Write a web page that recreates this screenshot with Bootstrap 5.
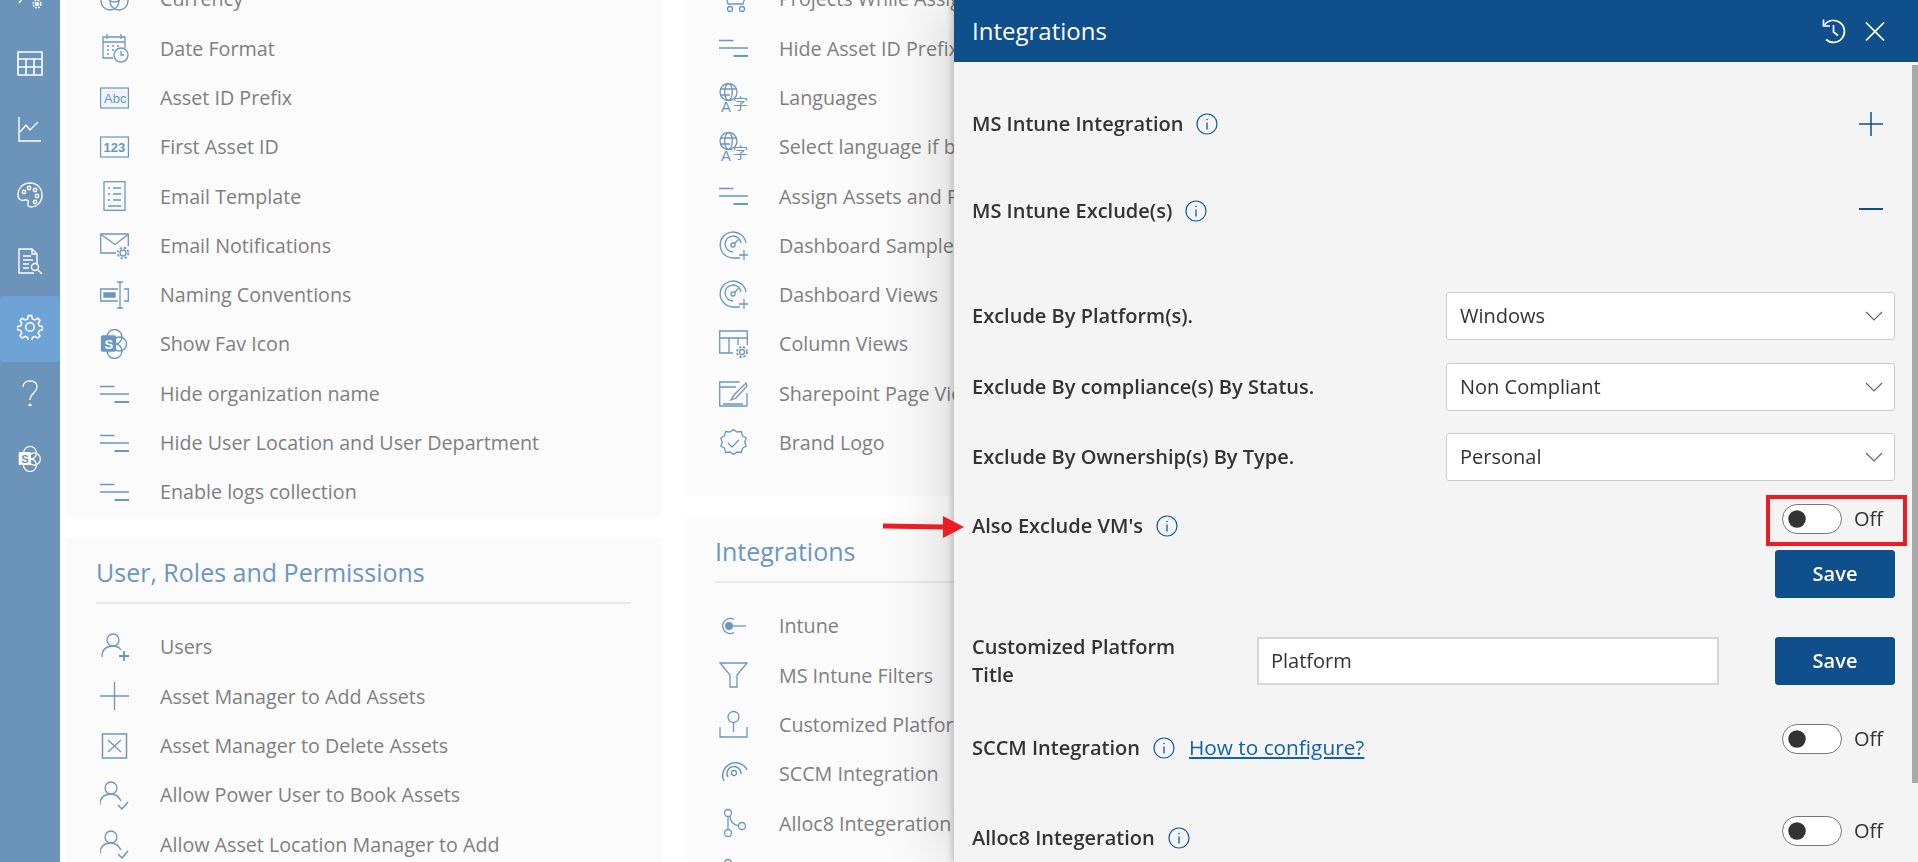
<!DOCTYPE html>
<html lang="en">
<head>
  <meta charset="UTF-8">
  <meta name="viewport" content="width=device-width, initial-scale=1.0">
  <title>Settings - Integrations</title>
  <link href="https://cdn.jsdelivr.net/npm/bootstrap@5.3.2/dist/css/bootstrap.min.css" rel="stylesheet">
  <style>
    body { font-family: "Open Sans", "Liberation Sans", sans-serif; background: #fff; overflow: hidden; height: 862px; }

    /* left rail */
    .side-rail { width: 60px; background: #6c93b9; color: #fff; flex: none; height: 862px; overflow: hidden; }
    .rail-item { height: 66px; width: 60px; flex: none; }
    .rail-item svg { width: 26px; height: 26px; fill: none; stroke: #fff; stroke-width: 1.4; }
    .rail-item.rail-top { height: 30px; }
    .rail-item.rail-top svg { width: 60px; height: 30px; }
    .rail-item.rail-on { background: #6fa3d5; border-radius: 4px; margin: 2px 0 -2px; padding-bottom: 4px; }

    /* settings cards behind the panel */
    .set-area { display: grid; grid-template-columns: 595px 595px; gap: 24px; padding-left: 6px; margin-top: -25px; }
    .set-col { display: flex; flex-direction: column; }
    .set-card { background: #fbfbfb; padding: 0 30px 0 34px; }
    .set-first-l { height: 542px; margin-bottom: 21px; }
    .set-first-r { height: 521px; margin-bottom: 21px; }
    .set-head { color: #6c96c2; font-size: 25px; font-weight: 400; margin: 0 0 0 -4px; padding: 16px 0 12px 0; line-height: 36px; border-bottom: 2px solid #e9e9e9; }
    .set-list { margin: 18.5px 0 0 0; padding: 0; list-style: none; }
    .set-list.list-top { margin-top: -0.5px; }
    .set-row { height: 49.3px; color: #7f7f7f; font-size: 19.7px; gap: 31px; white-space: nowrap; }
    .row-ico { width: 29px; height: 30px; flex: none; fill: none; stroke: #6c96c2; stroke-width: 1.3; color: #6c96c2; }

    /* integrations drawer */
    .int-panel.offcanvas { --bs-offcanvas-width: 964px; background: #f4f4f4; border-left: 0; overflow: visible;
      box-shadow: -3px 0 6px rgba(0,0,0,.16), -20px 0 50px rgba(0,0,0,.11); }
    .int-panel .offcanvas-header { height: 62px; background: #0f4f8b; color: #fff; padding: 0 30px 0 18px; flex: none; }
    .int-panel .offcanvas-title { font-size: 24px; font-weight: 400; line-height: 1; }
    .head-btn { width: 26px; height: 28px; fill: none; stroke: #fff; stroke-width: 1.7; }
    .int-body { padding: 18px 23px 0 18px; color: #333; overflow: hidden; }
    .int-label { font-size: 20px; font-weight: 600; color: #333; line-height: 28px; margin: 0; }
    .int-acc { height: 87px; }
    .info-ico { width: 22px; height: 22px; flex: none; margin-left: 13px; fill: none; stroke: #0f5a9c; stroke-width: 1.2; }
    .acc-ico { width: 26px; height: 26px; fill: none; stroke: #0f4f8b; margin-right: 11px; }
    .select-row { height: 48px; margin-bottom: 22.5px; }
    .select-row.select-first { margin-top: 38px; }
    .int-select.form-select { width: 449px; height: 48px; border-radius: 3px; border-color: #ccc; color: #333; font-size: 20px; padding: 0 40px 0 13px;
      background-size: 20px 12px; background-position: right 10px center;
      background-image: url("data:image/svg+xml,%3csvg xmlns='http://www.w3.org/2000/svg' viewBox='0 0 20 12'%3e%3cpath fill='none' stroke='%23666' stroke-width='1.2' d='M2 2l8 8 8-8'/%3e%3c/svg%3e"); }
    .int-input.form-control { width: 462px; height: 48px; flex: none; border-radius: 0; border: 2px solid #d5d5d5; font-size: 20px; color: #333; padding: 0 12px; }
    .save-btn.btn { width: 120px; height: 48px; padding: 0; background: #0f4f8b; border-color: #0f4f8b; color: #fff; font-weight: 600; font-size: 20px; border-radius: 3px; flex: none; }
    .label-wide { width: 285px; flex: none; padding-right: 60px; }
    .switch-wrap { width: 113px; flex: none; }
    .int-switch.form-switch { padding: 0; margin: 0; min-height: 0; gap: 12px; }
    .int-switch .form-check-input { width: 60px; height: 30px; margin: 0; float: none; border: 1px solid #777; box-shadow: none;
      --bs-form-switch-bg: url("data:image/svg+xml,%3csvg xmlns='http://www.w3.org/2000/svg' viewBox='-4 -4 8 8'%3e%3ccircle r='2.5' fill='%23333'/%3e%3c/svg%3e"); }
    .int-switch .form-check-label { font-size: 20px; color: #333; line-height: 1; }
    .tog-row { height: 30px; }
    .tog-label { margin-top: 14px; }
    .tog-label.tog-low { margin-top: 19px; }
    .gap-customized { margin-top: 35px; }
    .gap-sccm { margin-top: 35px; }
    .gap-alloc { margin-top: 62px; }
    .how-link { color: #0f62ac; font-size: 20.8px; margin-left: 14px; font-weight: 400; }
    .pan-bar { position: absolute; right: 0; top: 65px; width: 6px; height: 718px; background: #aaa; }
    .red-box { position: absolute; left: 812px; top: 495px; width: 141px; height: 51px; border: 4px solid #ed1c24; }
    .red-arrow { position: absolute; left: -71px; top: 515px; width: 81px; height: 24px; }
  </style>
</head>
<body>
  <!-- shared icons -->
  <svg width="0" height="0" class="position-absolute">
    <symbol id="i-lines" viewBox="0 0 29 30"><path d="M0 7.500h14.500M0 15h29"/><path stroke-width="2" d="M14.500 23h14.500"/></symbol>
    <symbol id="i-dash" viewBox="0 0 29 30"><path d="M27 12A13 13 0 1 0 14 27h7"/><path d="M22 12A8 8 0 1 0 14 21"/><circle cx="14" cy="14" r="2"/><path d="M15.500 12.500l4-4"/><path d="M25 19v10M20 24h9"/></symbol>
    <symbol id="i-uplus" viewBox="0 0 29 30"><circle cx="13" cy="8" r="6"/><path d="M2 25c0-7 4-11 11-11 4 0 6 1 8 4"/><path stroke-width="1.800" d="M24 19v10M19 24h10"/></symbol>
    <symbol id="i-ucheck" viewBox="0 0 29 30"><circle cx="11" cy="8" r="6"/><path d="M0 25c0-7 4-11 11-11 5 0 8 3 10 7"/><path stroke-width="1.500" d="M18 25l4 4 6-7"/></symbol>
    <symbol id="i-gear" viewBox="0 0 24 24"><path d="M10.500 1.500h3l.7 3 2.300 1 2.700-1.600 2 2-1.600 2.700 1 2.300 3 .7v3l-3 .7-1 2.300 1.600 2.700-2 2-2.700-1.600-2.300 1-.7 3h-3l-.7-3-2.300-1-2.700 1.600-2-2 1.600-2.700-1-2.300-3-.7v-3l3-.7 1-2.300-1.600-2.700 2-2 2.700 1.600 2.300-1z"/><circle cx="12" cy="12" r="4"/></symbol>
    <symbol id="i-info" viewBox="0 0 22 22"><circle cx="11" cy="11" r="10"/><path d="M11 9.500v7" stroke-width="1.300"/><circle cx="11" cy="6.500" r=".8" fill="#0f5a9c" stroke="none"/></symbol>
  </svg>

  <div class="d-flex">
    <nav class="side-rail d-flex flex-column">
      <a class="rail-item rail-top d-flex"><svg viewBox="0 0 60 30"><path d="M19 3l3-4"/><circle cx="37" cy="4" r="2.200" fill="#fff" stroke="none"/><circle cx="37" cy="4" r="3.800" stroke-width="1.600" stroke-dasharray="1.800 1.200"/></svg></a>
      <a class="rail-item d-flex align-items-center justify-content-center"><svg viewBox="0 0 26 26"><path d="M1 2h24v23H1zM1 9h24M1 17h24M9 9v16M17 9v16" stroke-width="1.600"/></svg></a>
      <a class="rail-item d-flex align-items-center justify-content-center"><svg viewBox="0 0 26 26"><path d="M2 1v24h22M3 16l6-7 4 5 8-8"/></svg></a>
      <a class="rail-item d-flex align-items-center justify-content-center"><svg viewBox="0 0 26 26"><path d="M13 1C6 1 1 6 1 13c0 5 4 6 7 5 3-.5 4 1 3 3-1 3 1 4 3 4 6 0 11-5 11-12S20 1 13 1z"/><circle cx="7" cy="10" r="1.700"/><circle cx="12" cy="6" r="1.700"/><circle cx="18" cy="8" r="1.700"/><circle cx="20" cy="14" r="1.700"/><circle cx="18" cy="20" r="1.700"/></svg></a>
      <a class="rail-item d-flex align-items-center justify-content-center"><svg viewBox="0 0 26 26"><path d="M17 25H2V1h13l5 5v10M15 1v5h5M6 8h8M6 12h10M6 16h6M6 20h6"/><circle cx="18" cy="19" r="3.500"/><path d="M21 22l4 4"/></svg></a>
      <a class="rail-item rail-on d-flex align-items-center justify-content-center"><svg viewBox="0 0 24 24"><use href="#i-gear"/></svg></a>
      <a class="rail-item d-flex align-items-center justify-content-center"><svg viewBox="0 0 26 26"><path d="M6 7c0-4 3-6 7-6s7 2 7 6c0 6-7 6-7 13" stroke-width="1.300"/><circle cx="13" cy="25" r=".9" fill="#fff"/></svg></a>
      <a class="rail-item d-flex align-items-center justify-content-center"><svg viewBox="0 0 26 30"><circle cx="13" cy="8" r="7.500"/><circle cx="18" cy="15" r="7"/><circle cx="13" cy="22" r="7.500"/><rect x="0" y="7" width="14" height="15" rx="1" fill="#fff" stroke="none"/><text x="3" y="19.500" font-size="13" font-weight="700" font-family="Liberation Sans" fill="#6c93b9" stroke="none">S</text></svg></a>
    </nav>

    <main class="set-area flex-grow-1">
      <div class="set-col">
        <section class="set-card set-first-l">
          <ul class="set-list list-top">
            <li class="set-row d-flex align-items-center"><svg class="row-ico" viewBox="0 0 29 30"><circle cx="10" cy="17" r="9"/><circle cx="19" cy="17" r="9"/><circle cx="14.500" cy="10" r="8"/></svg><span>Currency</span></li>
            <li class="set-row d-flex align-items-center"><svg class="row-ico" viewBox="0 0 29 30"><path d="M13 25H3V4h22v11M3 9h22M7 1v5M21 1v5M7 13h2M12 13h2M17 13h2M7 17h2M12 17h2M7 21h2"/><circle cx="21" cy="22" r="7"/><path d="M21 18v4h3"/></svg><span>Date Format</span></li>
            <li class="set-row d-flex align-items-center"><svg class="row-ico" viewBox="0 0 29 30"><rect x=".6" y="5" width="27.800" height="20" stroke-width="1.200" fill="#f1f5fa"/><text x="4" y="20" font-size="13" font-family="Liberation Sans" fill="currentColor" stroke="none">Abc</text></svg><span>Asset ID Prefix</span></li>
            <li class="set-row d-flex align-items-center"><svg class="row-ico" viewBox="0 0 29 30"><rect x=".6" y="5" width="27.800" height="20" stroke-width="1.200"/><text x="3.500" y="20" font-size="13" font-weight="700" font-family="Liberation Sans" fill="currentColor" stroke="none">123</text></svg><span>First Asset ID</span></li>
            <li class="set-row d-flex align-items-center"><svg class="row-ico" viewBox="0 0 29 30"><rect x="4" y=".7" width="21" height="28.600"/><path d="M8 7h2M13 7h8M8 13h2M13 13h8M8 19h2M13 19h8M8 25h13"/></svg><span>Email Template</span></li>
            <li class="set-row d-flex align-items-center"><svg class="row-ico" viewBox="0 0 29 30"><path d="M16 22H.7V3h27.600v12"/><path d="M1 3.500l14 10 13-10"/><circle cx="23" cy="22" r="3"/><circle cx="23" cy="22" r="5.300" stroke-dasharray="2.200 2" stroke-width="1.800"/></svg><span>Email Notifications</span></li>
            <li class="set-row d-flex align-items-center"><svg class="row-ico" viewBox="0 0 29 30"><path d="M18 9H.7v12H18M24 9h4.300v12H24"/><path fill="currentColor" d="M4 13h11v4H4z"/><path d="M17 2h6M17 28h6M20 2v26"/></svg><span>Naming Conventions</span></li>
            <li class="set-row d-flex align-items-center"><svg class="row-ico" viewBox="0 0 26 30"><circle cx="13" cy="8" r="7.500"/><circle cx="18" cy="15" r="7"/><circle cx="13" cy="22" r="7.500"/><rect x="0" y="7" width="14" height="15" rx="1" fill="currentColor"/><text x="3" y="19.500" font-size="13" font-weight="700" font-family="Liberation Sans" fill="#fff" stroke="none">S</text></svg><span>Show Fav Icon</span></li>
            <li class="set-row d-flex align-items-center"><svg class="row-ico"><use href="#i-lines"/></svg><span>Hide organization name</span></li>
            <li class="set-row d-flex align-items-center"><svg class="row-ico"><use href="#i-lines"/></svg><span>Hide User Location and User Department</span></li>
            <li class="set-row d-flex align-items-center"><svg class="row-ico"><use href="#i-lines"/></svg><span>Enable logs collection</span></li>
          </ul>
        </section>
        <section class="set-card">
          <h2 class="set-head">User, Roles and Permissions</h2>
          <ul class="set-list">
            <li class="set-row d-flex align-items-center"><svg class="row-ico"><use href="#i-uplus"/></svg><span>Users</span></li>
            <li class="set-row d-flex align-items-center"><svg class="row-ico" viewBox="0 0 29 30"><path d="M14.500 1v28M0 15h29"/></svg><span>Asset Manager to Add Assets</span></li>
            <li class="set-row d-flex align-items-center"><svg class="row-ico" viewBox="0 0 29 30"><rect x="2.500" y="3" width="24" height="24" stroke-width="1.500"/><path d="M8 9l13 12M21 9L8 21"/></svg><span>Asset Manager to Delete Assets</span></li>
            <li class="set-row d-flex align-items-center"><svg class="row-ico"><use href="#i-ucheck"/></svg><span>Allow Power User to Book Assets</span></li>
            <li class="set-row d-flex align-items-center"><svg class="row-ico"><use href="#i-ucheck"/></svg><span>Allow Asset Location Manager to Add</span></li>
          </ul>
        </section>
      </div>

      <div class="set-col">
        <section class="set-card set-first-r">
          <ul class="set-list list-top">
            <li class="set-row d-flex align-items-center"><svg class="row-ico" viewBox="0 0 29 30"><path d="M1 5h4l4 15h15l3-10H6"/><circle cx="11" cy="25" r="2.500"/><circle cx="23" cy="25" r="2.500"/></svg><span>Projects While Assigning Assets</span></li>
            <li class="set-row d-flex align-items-center"><svg class="row-ico"><use href="#i-lines"/></svg><span>Hide Asset ID Prefix</span></li>
            <li class="set-row d-flex align-items-center"><svg class="row-ico" viewBox="0 0 29 30"><circle cx="9.500" cy="9" r="8.500"/><ellipse cx="9.500" cy="9" rx="3.800" ry="8.500"/><path d="M1 6h17M1 12h10"/><text x="2" y="29" font-size="15" font-family="Liberation Sans" fill="currentColor" stroke="none">A</text><text x="14" y="26" font-size="15" font-family="Noto Sans CJK SC" fill="currentColor" stroke="none">字</text></svg><span>Languages</span></li>
            <li class="set-row d-flex align-items-center"><svg class="row-ico" viewBox="0 0 29 30"><circle cx="9.500" cy="9" r="8.500"/><ellipse cx="9.500" cy="9" rx="3.800" ry="8.500"/><path d="M1 6h17M1 12h10"/><text x="2" y="29" font-size="15" font-family="Liberation Sans" fill="currentColor" stroke="none">A</text><text x="14" y="26" font-size="15" font-family="Noto Sans CJK SC" fill="currentColor" stroke="none">字</text></svg><span>Select language if browser</span></li>
            <li class="set-row d-flex align-items-center"><svg class="row-ico"><use href="#i-lines"/></svg><span>Assign Assets and Projects</span></li>
            <li class="set-row d-flex align-items-center"><svg class="row-ico"><use href="#i-dash"/></svg><span>Dashboard Samples</span></li>
            <li class="set-row d-flex align-items-center"><svg class="row-ico"><use href="#i-dash"/></svg><span>Dashboard Views</span></li>
            <li class="set-row d-flex align-items-center"><svg class="row-ico" viewBox="0 0 29 30"><path d="M14 24H.7V2h27.600v14M1 9h27M10 9v15M19 9v7"/><circle cx="23" cy="23" r="2.500"/><circle cx="23" cy="23" r="5" stroke-dasharray="2.200 1.800" stroke-width="1.800"/></svg><span>Column Views</span></li>
            <li class="set-row d-flex align-items-center"><svg class="row-ico" viewBox="0 0 29 30"><path d="M28 14v13H.7V3h20M1 8h16M4 25h20" stroke-width="1.300"/><path d="M27 4L15 16l-3 5 5-2L28 7z"/></svg><span>Sharepoint Page View</span></li>
            <li class="set-row d-flex align-items-center"><svg class="row-ico" viewBox="0 0 29 30"><path d="M14.500 1.500l3.500 2.500 4.300-.5 1.200 4.300 3.700 2.200-1.500 4 1.500 4-3.700 2.200-1.200 4.300-4.300-.5-3.500 2.500-3.500-2.500-4.300.5-1.200-4.300-3.700-2.200 1.500-4-1.500-4 3.700-2.200 1.200-4.300 4.300.5z"/><path d="M9 15l4 4 7-7"/></svg><span>Brand Logo</span></li>
          </ul>
        </section>
        <section class="set-card">
          <h2 class="set-head">Integrations</h2>
          <ul class="set-list">
            <li class="set-row d-flex align-items-center"><svg class="row-ico" viewBox="0 0 29 30"><path d="M15 8.500a7.500 7.500 0 1 0 0 13"/><circle cx="10" cy="15" r="3.300" fill="currentColor"/><path d="M10 15h17"/></svg><span>Intune</span></li>
            <li class="set-row d-flex align-items-center"><svg class="row-ico" viewBox="0 0 29 30"><path d="M1 3h27L18 15v12h-7V15z"/></svg><span>MS Intune Filters</span></li>
            <li class="set-row d-flex align-items-center"><svg class="row-ico" viewBox="0 0 29 30"><circle cx="14.500" cy="7" r="5.500"/><path d="M14.500 13v9M1 17v10h27V17"/></svg><span>Customized Platform Title</span></li>
            <li class="set-row d-flex align-items-center"><svg class="row-ico" viewBox="0 0 29 30"><circle cx="15" cy="14" r="2.500"/><path d="M9 18a7 7 0 1 1 13-3M5 22A12 12 0 1 1 28 11" stroke-width="1.500"/></svg><span>SCCM Integration</span></li>
            <li class="set-row d-flex align-items-center"><svg class="row-ico" viewBox="0 0 29 30"><circle cx="9" cy="5" r="3.500"/><circle cx="9" cy="25" r="3.500"/><circle cx="23" cy="18" r="3.500"/><path d="M9 8.500v13M11 8c0 6 4 9 9 10"/></svg><span>Alloc8 Integeration</span></li>
            <li class="set-row d-flex align-items-center"><svg class="row-ico" viewBox="0 0 29 30"><circle cx="9" cy="5" r="3.500"/></svg></li>
          </ul>
        </section>
      </div>
    </main>
  </div>

  <aside class="offcanvas offcanvas-end show int-panel" tabindex="-1" data-bs-backdrop="false" data-bs-scroll="true" aria-labelledby="intTitle">
    <div class="offcanvas-header d-flex justify-content-between align-items-center">
      <h5 class="offcanvas-title" id="intTitle">Integrations</h5>
      <div class="d-flex align-items-center gap-3">
        <svg class="head-btn" viewBox="0 0 26 28"><path d="M4.500 8A11 11 0 1 1 6 22.500"/><path d="M3.500 2.500v6.500h6.500"/><path d="M13.500 8v7l4.500 3.500"/></svg>
        <svg class="head-btn" viewBox="0 0 26 28"><path d="M4 5.500l18 18M22 5.500l-18 18"/></svg>
      </div>
    </div>
    <div class="offcanvas-body int-body">
      <div class="int-acc d-flex align-items-center justify-content-between">
        <div class="d-flex align-items-center"><p class="int-label">MS Intune Integration</p><svg class="info-ico"><use href="#i-info"/></svg></div>
        <svg class="acc-ico" viewBox="0 0 26 26"><path stroke-width="1.500" d="M13 1v24M1 13h24"/></svg>
      </div>
      <div class="int-acc d-flex align-items-center justify-content-between">
        <div class="d-flex align-items-center"><p class="int-label">MS Intune Exclude(s)</p><svg class="info-ico"><use href="#i-info"/></svg></div>
        <svg class="acc-ico" viewBox="0 0 26 26"><path stroke-width="2" d="M1 11h24"/></svg>
      </div>

      <div class="select-row select-first d-flex align-items-center justify-content-between">
        <label class="int-label">Exclude By Platform(s).</label>
        <select class="form-select int-select"><option>Windows</option></select>
      </div>
      <div class="select-row d-flex align-items-center justify-content-between">
        <label class="int-label">Exclude By compliance(s) By Status.</label>
        <select class="form-select int-select"><option>Non Compliant</option></select>
      </div>
      <div class="select-row d-flex align-items-center justify-content-between">
        <label class="int-label">Exclude By Ownership(s) By Type.</label>
        <select class="form-select int-select"><option>Personal</option></select>
      </div>

      <div class="tog-row d-flex justify-content-between">
        <div class="d-flex align-items-center tog-label"><p class="int-label">Also Exclude VM's</p><svg class="info-ico"><use href="#i-info"/></svg></div>
        <div class="switch-wrap"><div class="form-check form-switch int-switch d-flex align-items-center"><input class="form-check-input" type="checkbox" role="switch" id="swVm"><label class="form-check-label" for="swVm">Off</label></div></div>
      </div>
      <div class="d-flex justify-content-end mt-3"><button class="btn save-btn" type="button">Save</button></div>

      <div class="d-flex align-items-center gap-customized">
        <p class="int-label label-wide">Customized Platform Title</p>
        <input class="form-control int-input me-auto" type="text" value="Platform">
        <button class="btn save-btn" type="button">Save</button>
      </div>

      <div class="tog-row d-flex justify-content-between gap-sccm">
        <div class="d-flex align-items-center tog-label tog-low"><p class="int-label">SCCM Integration</p><svg class="info-ico"><use href="#i-info"/></svg><a href="#" class="how-link">How to configure?</a></div>
        <div class="switch-wrap"><div class="form-check form-switch int-switch d-flex align-items-center"><input class="form-check-input" type="checkbox" role="switch" id="swSccm"><label class="form-check-label" for="swSccm">Off</label></div></div>
      </div>
      <div class="tog-row d-flex justify-content-between gap-alloc">
        <div class="d-flex align-items-center tog-label"><p class="int-label">Alloc8 Integeration</p><svg class="info-ico"><use href="#i-info"/></svg></div>
        <div class="switch-wrap"><div class="form-check form-switch int-switch d-flex align-items-center"><input class="form-check-input" type="checkbox" role="switch" id="swAlloc"><label class="form-check-label" for="swAlloc">Off</label></div></div>
      </div>
    </div>

    <!-- scrollbar + annotations sit over the panel -->
    <div class="pan-bar"></div>
    <div class="red-box"></div>
    <svg class="red-arrow" viewBox="0 0 81 24"><path d="M0 8.500l60 1V1l21 11-21 11v-8.500l-60-1z" fill="#ed1c24"/></svg>
  </aside>

  <script src="https://cdn.jsdelivr.net/npm/bootstrap@5.3.2/dist/js/bootstrap.bundle.min.js"></script>
</body>
</html>
